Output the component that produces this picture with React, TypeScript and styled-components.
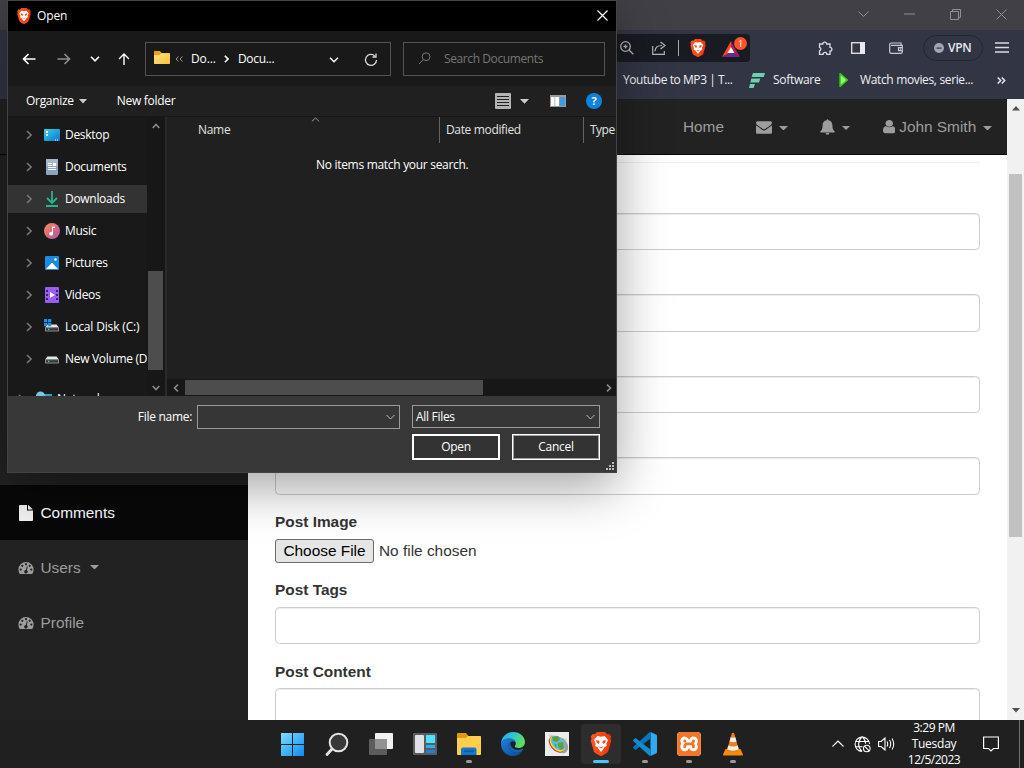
import React from 'react';
import styled, { createGlobalStyle } from 'styled-components';
import { SiXampp } from 'react-icons/si';

const GlobalStyle = createGlobalStyle`
  * { box-sizing: border-box; }
  html, body { margin: 0; padding: 0; }
  body { width: 1024px; height: 768px; overflow: hidden; background: #202020; }
  svg { display: block; flex: none; }
`;

const UI_FONT = `"Open Sans", "Noto Sans", sans-serif`;

const Desktop = styled.div`
  position: relative;
  width: 1024px;
  height: 768px;
  display: flex;
  flex-direction: column;
  overflow: hidden;
  font: 12px/16px ${UI_FONT};
`;

const Text = styled.span<{ $ls?: number; $color?: string }>`
  white-space: nowrap;
  letter-spacing: ${(p) => p.$ls ?? -0.3}px;
  color: ${(p) => p.$color ?? 'inherit'};
`;

/* ---------- browser chrome ---------- */

const TitleBar = styled.div`
  height: 30px;
  flex: none;
  background: #404046;
  display: flex;
  justify-content: flex-end;
  align-items: center;
  padding: 0 17px 2px 0;
  gap: 35px;
`;

const Toolbar = styled.div`
  height: 35px;
  flex: none;
  background: #323544;
  display: flex;
  align-items: center;
  padding-right: 15px;
`;

const UrlBar = styled.div`
  width: 742px;
  margin-left: 8px;
  height: 28px;
  background: #191b22;
  border-radius: 4px;
  display: flex;
  align-items: center;
  justify-content: flex-end;
  padding-right: 3px;
`;

const ToolbarActions = styled.div`
  flex: 1;
  display: flex;
  align-items: center;
  justify-content: flex-end;
`;

const Slot = styled.div<{ $ml?: number; $mt?: number }>`
  display: flex;
  margin-left: ${(p) => p.$ml ?? 0}px;
  margin-top: ${(p) => p.$mt ?? 0}px;
`;

const UrlDivider = styled.div`
  width: 1px;
  height: 16px;
  margin: 0 10px 0 12px;
  background: #a3a5ac;
`;

const Rewards = styled.div`
  position: relative;
  margin-left: 15px;
  width: 25px;
  height: 22px;
  display: flex;
  align-items: flex-end;
  padding-bottom: 2px;
`;

const Badge = styled.div`
  position: absolute;
  right: 0;
  top: 0;
  width: 13px;
  height: 13px;
  border-radius: 50%;
  background: #fb542b;
  color: #fff;
  font-size: 9px;
  line-height: 13px;
  text-align: center;
`;

const VpnPill = styled.div`
  width: 60px;
  height: 26px;
  margin: 0 12px 0 20px;
  border: 1px solid #232532;
  border-radius: 13px;
  display: flex;
  align-items: center;
  gap: 4px;
  padding-left: 10px;
  color: #e8e8ee;
  font-weight: 600;
`;

const Bookmarks = styled.div`
  height: 34px;
  flex: none;
  background: #323544;
  display: flex;
  align-items: center;
  padding: 0 18px 4px 623px;
  color: #f0f0f3;
`;

const Bookmark = styled.div<{ $w: number; $gap?: number }>`
  width: ${(p) => p.$w}px;
  display: flex;
  align-items: center;
  gap: ${(p) => p.$gap ?? 0}px;
`;

/* ---------- admin page ---------- */

const Page = styled.div`
  height: 621px;
  flex: none;
  display: flex;
  overflow: hidden;
  font: 15.4px/22px "Liberation Sans", Arial, sans-serif;
`;

const Site = styled.div`
  flex: 1;
  display: flex;
  flex-direction: column;
  background: #222;
`;

const Navbar = styled.nav`
  height: 56px;
  flex: none;
  background: #222;
  border-bottom: 1px solid #080808;
  display: flex;
  justify-content: flex-end;
  color: #9d9d9d;
`;

const NavLink = styled.a`
  display: flex;
  align-items: center;
  padding: 0 16.2px;

  &:last-child { padding-right: 15.5px; }
`;

const Caret = styled.span<{ $ml?: number; $mt?: number }>`
  width: 8.8px;
  border: 4.4px solid transparent;
  border-top-color: currentColor;
  border-bottom: 0;
  margin-left: ${(p) => p.$ml ?? 6.5}px;
  margin-top: ${(p) => p.$mt ?? 2}px;
`;

const SiteBody = styled.div`
  flex: 1;
  min-height: 0;
  display: flex;
`;

const Sidebar = styled.aside`
  width: 248px;
  flex: none;
  padding-top: 330px;
  background: #222;
`;

const SidebarItem = styled.a<{ $active?: boolean }>`
  height: 55px;
  display: flex;
  align-items: center;
  padding-left: 18px;
  gap: 6.5px;
  color: ${(p) => (p.$active ? '#fff' : '#9d9d9d')};
  background: ${(p) => (p.$active ? '#080808' : 'transparent')};
`;

const Content = styled.main`
  flex: 1;
  background: #fff;
  padding: 7px 27px 0 27px;
  overflow: hidden;
  color: #333;
`;

const Rule = styled.hr`
  height: 1px;
  border: 0;
  margin: 0 0 22.6px;
  background: #eee;
`;

const Field = styled.div`
  margin-bottom: 16.5px;
`;

const FieldLabel = styled.label`
  display: block;
  height: 22px;
  margin-bottom: 5.5px;
  font-weight: 700;
`;

const Input = styled.div<{ $h?: number }>`
  height: ${(p) => p.$h ?? 37.4}px;
  border: 1px solid #ccc;
  border-radius: 4.4px;
  box-shadow: inset 0 1px 1px rgba(0, 0, 0, 0.075);
`;

const FileRow = styled.div`
  height: 24px;
  display: flex;
  align-items: center;
  gap: 5px;
`;

const FileButton = styled.button`
  width: 99px;
  height: 24px;
  padding: 0;
  border: 1px solid #6b6b6b;
  border-radius: 3px;
  background: #e6e6e6;
  color: #000;
  font: inherit;
`;

const PageScroll = styled.div`
  width: 17px;
  flex: none;
  background: #f1f1f1;
  display: flex;
  flex-direction: column;
  align-items: center;
  padding: 7px 0;
`;

const PageThumb = styled.div`
  width: 13px;
  height: 363px;
  margin: 63px 0 auto;
  background: #c1c1c1;
`;

/* ---------- file dialog ---------- */

const Dialog = styled.section`
  position: absolute;
  left: 7px;
  top: 0;
  width: 610px;
  height: 472.5px;
  border: 1px solid #434347;
  background: #202020;
  box-shadow: 0 14px 48px rgba(0, 0, 0, 0.36);
  display: flex;
  flex-direction: column;
  color: #fff;
`;

const DialogTitle = styled.header`
  height: 30px;
  flex: none;
  background: #000;
  display: flex;
  align-items: center;
  padding: 0 8px 1px 8px;
  gap: 5px;
`;

const Grow = styled.div`
  flex: 1;
`;

const AddressRow = styled.div`
  height: 55px;
  flex: none;
  background: #191919;
  display: flex;
  align-items: center;
  padding: 0 11px 0 13px;
`;

const NavButtons = styled.div`
  width: 124px;
  display: flex;
  align-items: center;
`;

const AddressBox = styled.div`
  width: 246px;
  height: 34px;
  border: 1px solid #535353;
  display: flex;
  align-items: center;
  padding: 0 12px 0 8px;
`;

const SearchBox = styled.div`
  width: 202px;
  height: 34px;
  margin-left: 12px;
  border: 1px solid #535353;
  display: flex;
  align-items: center;
  padding-left: 14px;
  gap: 13px;
  color: #767676;
`;

const CommandBar = styled.div`
  height: 31px;
  flex: none;
  border-bottom: 1px solid #171717;
  display: flex;
  align-items: center;
  padding: 0 14px 0 18px;
`;

const Browse = styled.div`
  height: 279px;
  flex: none;
  display: flex;
`;

const Tree = styled.div`
  width: 139px;
  flex: none;
  background: #191919;
  padding-top: 4px;
  overflow: hidden;
`;

const TreeRow = styled.div<{ $selected?: boolean; $root?: boolean }>`
  height: 28px;
  margin-bottom: 4px;
  margin-top: ${(p) => (p.$root ? 12 : 0)}px;
  padding-left: ${(p) => (p.$root ? 10 : 18)}px;
  display: flex;
  align-items: center;
  background: ${(p) => (p.$selected ? '#333' : 'transparent')};
`;

const TreeIcon = styled.div`
  width: 16px;
  margin: 0 5px 0 12px;
  display: flex;
  justify-content: center;
`;

const TreeScroll = styled.div`
  width: 18px;
  flex: none;
  background: #171717;
  display: flex;
  flex-direction: column;
  align-items: center;
  padding: 6px 1px 5px 0;
`;

const TreeThumb = styled.div`
  width: 15px;
  height: 99px;
  margin: auto 0 15px 0;
  background: #4d4d4d;
`;

const FilePane = styled.div`
  flex: 1;
  border-left: 2px solid #2a2a2a;
  display: flex;
  flex-direction: column;
  overflow: hidden;
`;

const Columns = styled.div`
  height: 26px;
  display: flex;
  color: #e2e2e2;
`;

const Column = styled.div<{ $w: number; $pl: number }>`
  width: ${(p) => p.$w}px;
  flex: none;
  padding: 5px 0 0 ${(p) => p.$pl}px;
  border-right: 1px solid #636363;
  display: flex;
  align-items: flex-start;
`;

const SortMark = styled.div`
  margin: -5px 0 0 81px;
`;

const EmptyNote = styled.div`
  flex: 1;
  padding-top: 14px;
  padding-left: 149px;
`;

const HScroll = styled.div`
  height: 17px;
  background: #171717;
  display: flex;
  align-items: center;
  padding: 0 4px 0 6px;
`;

const HThumb = styled.div`
  width: 298px;
  height: 15px;
  margin: 0 auto 0 6px;
  background: #4d4d4d;
`;

const Footer = styled.footer`
  flex: 1;
  background: #383838;
  display: grid;
  grid-template-columns: 184px 208px 205px;
  grid-template-rows: 24px 26px;
  row-gap: 5px;
  padding-top: 9px;
  position: relative;
`;

const FileNameLabel = styled.div`
  text-align: right;
  line-height: 24px;
`;

const Combo = styled.div<{ $w: number; $h: number; $ml: number }>`
  width: ${(p) => p.$w}px;
  height: ${(p) => p.$h}px;
  margin-left: ${(p) => p.$ml}px;
  border: 1px solid #9a9a9a;
  background: #363636;
  display: flex;
  align-items: center;
  justify-content: space-between;
  padding: 0 4px 0 3px;
`;

const Buttons = styled.div`
  grid-column: 3;
  margin-left: 12px;
  display: flex;
  gap: 12px;
`;

const DialogButton = styled.button<{ $primary?: boolean }>`
  width: 88px;
  height: 26px;
  flex: none;
  padding: 0;
  border: ${(p) => (p.$primary ? '2px solid #fff' : '1px solid #fff')};
  box-shadow: ${(p) => (p.$primary ? 'none' : 'inset 0 0 0 1px #a0a0a0')};
  background: #333;
  color: #fff;
  font: 12px/16px ${UI_FONT};
`;

const Grip = styled.div`
  position: absolute;
  right: 2px;
  bottom: 2px;
`;

const HelpDot = styled.span`
  width: 16px;
  height: 16px;
  border-radius: 50%;
  background: #0c84dd;
  color: #fff;
  font-weight: 700;
  font-size: 11px;
  line-height: 16px;
  text-align: center;
`;

/* ---------- taskbar ---------- */

const Taskbar = styled.footer`
  height: 48px;
  flex: none;
  background: #202020;
  display: flex;
  align-items: center;
  padding-left: 273px;
  color: #fff;
`;

const Apps = styled.div`
  display: flex;
  gap: 4px;
`;

const AppSlot = styled.div<{ $active?: boolean }>`
  width: 40px;
  height: 40px;
  border-radius: 4px;
  background: ${(p) => (p.$active ? '#2d2d2d' : 'transparent')};
  display: flex;
  flex-direction: column;
  align-items: center;
  padding-top: 8px;
`;

const RunMark = styled.div<{ $active?: boolean }>`
  width: ${(p) => (p.$active ? 16 : 6)}px;
  height: 3px;
  margin-top: 4px;
  border-radius: 2px;
  background: ${(p) => (p.$active ? '#4cc2ff' : '#9a9a9a')};
`;

const Tray = styled.div`
  flex: 1;
  height: 48px;
  display: flex;
  align-items: center;
  justify-content: flex-end;
`;

const Clock = styled.div`
  width: 60px;
  margin: 0 19px 0 9px;
  display: flex;
  flex-direction: column;
  align-items: center;
`;

const ShowDesktop = styled.div`
  width: 5px;
  height: 48px;
  margin-left: 20px;
  border-left: 1px solid #707070;
`;

/* ---------- drawings ---------- */

type StrokeProps = { w: number; h: number; d: string; c?: string; sw?: number };
const Stroke = ({ w, h, d, c = '#fff', sw = 1.2 }: StrokeProps) => (
  <svg width={w} height={h} viewBox={`0 0 ${w} ${h}`} fill="none" stroke={c} strokeWidth={sw}>
    <path d={d} />
  </svg>
);

const Brave = ({ s }: { s: number }) => (
  <svg width={s} height={s} viewBox="0 0 24 24">
    <defs>
      <linearGradient id="braveShield" x1="0" y1="0" x2="1" y2="0">
        <stop offset="0" stopColor="#ff5a1c" />
        <stop offset="1" stopColor="#f5340e" />
      </linearGradient>
    </defs>
    <path d="M8 0h8l2.200 2.300 2-.3 2 2.500-.8 2.200.8 2-2.800 9.800c-.4 1.400-1 2-2 2.700L12.600 24h-1.200l-4.800-2.800c-1-.7-1.600-1.300-2-2.700L1.800 8.700l.8-2-.8-2.200 2-2.500 2 .3z" fill="url(#braveShield)" />
    <path d="M8.300 4l3.700.8 3.700-.8 3.300 4-1.600 3.800.3 2.200-2.600 1.600-.4 1.200L12 20l-2.700-3.200-.4-1.200L6.300 14l.3-2.200L5 8z" fill="#fff" />
    <path d="M7.200 8l3 .8.300 2-1 1.200-1.800-1.600zM16.800 8l-3 .8-.3 2 1 1.200 1.800-1.600zM9.200 14.200l2.800 1 2.800-1-2.800 2.300z" fill="#fb4a1d" />
  </svg>
);

const Envelope = () => (
  <svg width="16" height="16" viewBox="0 0 1792 1792" fill="currentColor">
    <path d="M1792 710v794q0 66-47 113t-113 47h-1472q-66 0-113-47t-47-113v-794q44 49 101 87 362 246 497 345 57 42 92.5 65.5t94.5 48 110 24.5h2q51 0 110-24.5t94.5-48 92.5-65.5q170-123 498-345 57-39 100-87zm0-294q0 79-49 151t-122 123q-376 261-468 325-10 7-42.5 31t-54 38.5-52 32.5-57.5 27-50 9h-2q-23 0-50-9t-57.5-27-52-32.5-54-38.5-42.5-31q-91-64-262-182.5t-205-142.5q-62-42-117-115.5t-55-136.5q0-78 41.5-130t118.5-52h1472q65 0 112.5 47t47.5 113z" />
  </svg>
);

const Bell = () => (
  <svg width="15" height="16" viewBox="0 0 15 16" fill="currentColor">
    <path d="M6.6 1.2a.9.9 0 0 1 1.8 0c2.6.4 4 2.4 4 5 0 3.600.8 5 2.400 6.300 0 .6-.5 1-1.100 1H1.300c-.6 0-1.100-.4-1.100-1C1.800 11.200 2.600 9.800 2.600 6.200c0-2.600 1.400-4.600 4-5zM5.600 14h3.800a1.900 1.700 0 0 1-3.800 0z" />
  </svg>
);

const User = () => (
  <svg width="12.500" height="15.400" viewBox="256 0 1280 1792" fill="currentColor" preserveAspectRatio="none">
    <path d="M1536 1399q0 109-62.5 187t-150.5 78h-854q-88 0-150.5-78t-62.500-187q0-85 8.500-160.500t31.500-152 58.500-131 94-89 134.500-34.500q131 128 313 128t313-128q76 0 134.500 34.500t94 89 58.500 131 31.500 152 8.500 160.500zm-256-887q0 159-112.500 271.500t-271.500 112.500-271.500-112.500-112.500-271.500 112.500-271.500 271.500-112.500 271.500 112.500 112.500 271.500z" />
  </svg>
);

const FileGlyph = () => (
  <svg width="16" height="16" viewBox="0 0 16 16" fill="#f2f2f2">
    <path d="M2 0h7v5.400h6V15a1 1 0 0 1-1 1H2a1 1 0 0 1-1-1V1a1 1 0 0 1 1-1zM10 .1c.4.1.7.3 1 .6l3.200 3c.3.3.5.500.6.700H10z" />
  </svg>
);

const Gauge = () => (
  <svg width="16" height="16" viewBox="0 0 16 16">
    <path d="M.4 9.600a7.600 7.600 0 0 1 15.200 0c0 1.500-.4 2.900-1.200 4.100-.2.200-.4.300-.6.300H2.200c-.2 0-.4-.1-.6-.3C.8 12.500.4 11.100.4 9.600z" fill="#9d9d9d" />
    <g fill="#222">
      <circle cx="2.700" cy="9.600" r="1.100" />
      <circle cx="4.300" cy="5.800" r="1.100" />
      <circle cx="8" cy="4.200" r="1.100" />
      <circle cx="11.700" cy="5.800" r="1.100" />
      <circle cx="13.300" cy="9.600" r="1.100" />
      <path d="M8.800 6.200l.9.200-.9 3.800a1.800 1.800 0 1 1-1-.2z" />
    </g>
  </svg>
);

const Folder = () => (
  <svg width="16" height="13" viewBox="0 0 24 20" preserveAspectRatio="none">
    <defs>
      <linearGradient id="folderFace" x1="0" y1="0" x2="1" y2="1">
        <stop offset="0" stopColor="#ffe38a" />
        <stop offset="1" stopColor="#fdc137" />
      </linearGradient>
    </defs>
    <path d="M1 0h8l2.500 3H23a1 1 0 0 1 1 1v5H0V1a1 1 0 0 1 1-1z" fill="#e8a50c" />
    <path d="M0 6h8.500L11 3.500h12a1 1 0 0 1 1 1V19a1 1 0 0 1-1 1H1a1 1 0 0 1-1-1z" fill="url(#folderFace)" />
  </svg>
);

const DesktopIcon = () => (
  <svg width="16" height="12" viewBox="0 0 16 12">
    <defs>
      <linearGradient id="desk" x1="0" y1="0" x2="1" y2="1">
        <stop offset="0" stopColor="#36d3ee" />
        <stop offset="1" stopColor="#0b73c8" />
      </linearGradient>
    </defs>
    <rect width="16" height="12" rx="1" fill="url(#desk)" />
    <path d="M2 2h2v2H2zM2 5h2v2H2zM11 10.500h1v1h-1zM13 10.500h1v1h-1z" fill="#fff" />
  </svg>
);
const DocumentsIcon = () => (
  <svg width="12" height="16" viewBox="0 0 12 16">
    <rect width="12" height="16" rx="1" fill="#8ba3bf" />
    <rect width="12" height="7" rx="1" fill="#a5b8ce" />
    <path d="M2 4.500h4M2 6.500h4M2 8.500h8M2 10.500h8" stroke="#fff" />
    <path d="M7 4h3v3H7z" fill="#fff" />
  </svg>
);
const DownloadsIcon = () => (
  <svg width="12" height="16" viewBox="0 0 12 16" fill="none" stroke="#23b590" strokeWidth="1.800">
    <path d="M6 0v12M1 7l5 5 5-5M0 15h12" />
  </svg>
);
const MusicIcon = () => (
  <svg width="16" height="16" viewBox="0 0 16 16">
    <defs>
      <linearGradient id="music" x1="0" y1="0" x2="1" y2="1">
        <stop offset="0" stopColor="#f0935a" />
        <stop offset=".5" stopColor="#d9697a" />
        <stop offset="1" stopColor="#a05cb8" />
      </linearGradient>
    </defs>
    <circle cx="8" cy="8" r="8" fill="url(#music)" />
    <path d="M8 3.500h3V5H9v6H8z" fill="#fff" />
    <circle cx="7.200" cy="10.700" r="1.900" fill="#fff" />
  </svg>
);
const PicturesIcon = () => (
  <svg width="14" height="14" viewBox="0 0 14 14">
    <rect width="14" height="14" rx="1" fill="#1b8ae0" />
    <path d="M1 13l5.200-5.500c.5-.6 1.100-.6 1.600 0L13 13z" fill="#fff" />
    <circle cx="10.500" cy="3.500" r="1.200" fill="#fff" />
  </svg>
);
const VideosIcon = () => (
  <svg width="14" height="16" viewBox="0 0 14 16">
    <rect width="14" height="16" rx="1" fill="#9b5cf0" />
    <path d="M1 3h2v2H1zM1 7h2v2H1zM1 11h2v2H1zM11 3h2v2h-2zM11 7h2v2h-2zM11 11h2v2h-2z" fill="#3f1f78" />
    <path d="M5 5l5 3-5 3z" fill="#fff" />
  </svg>
);
const DiskIcon = ({ system }: { system?: boolean }) => (
  <svg width="16" height="16" viewBox="0 0 16 16">
    <path d="M3.500 5.500h9L15 8.500H1z" fill="#e6e6ea" />
    <rect x="1" y="8.500" width="14" height="4" rx=".6" fill="#8b8d90" />
    <rect x="2" y="9.200" width="12" height="2.300" fill="#343638" />
    <rect x="4" y="9.700" width="1.300" height="1.300" fill="#34e34a" />
    {system && <path d="M0 0h3.300v3.300H0zM4 0h3.300v3.300H4zM0 4h3.300v3.300H0zM4 4h3.300v3.300H4z" fill="#1593ea" />}
  </svg>
);
const NetworkIcon = () => (
  <svg width="16" height="16" viewBox="0 0 16 16">
    <rect x="5" y="3" width="11" height="9" fill="#2aa3c9" />
    <circle cx="4.500" cy="5" r="4.500" fill="#7cc4e4" />
  </svg>
);

const Chevron = () => <Stroke w={6} h={10} d="M1 1l4 4-4 4" c="#757575" sw={1.6} />;

const treeItems: { label: string; icon: React.ReactNode; ls?: number; selected?: boolean }[] = [
  { label: 'Desktop', icon: <DesktopIcon /> },
  { label: 'Documents', icon: <DocumentsIcon /> },
  { label: 'Downloads', icon: <DownloadsIcon />, selected: true },
  { label: 'Music', icon: <MusicIcon /> },
  { label: 'Pictures', icon: <PicturesIcon /> },
  { label: 'Videos', icon: <VideosIcon /> },
  { label: 'Local Disk (C:)', icon: <DiskIcon system />, ls: -0.15 },
  { label: 'New Volume (D:)', icon: <DiskIcon /> },
];

const Windows = () => (
  <svg width="24" height="24" viewBox="0 0 24 24">
    <defs>
      <linearGradient id="win" x1="0" y1="0" x2="1" y2="1">
        <stop offset="0" stopColor="#7fdcff" />
        <stop offset="1" stopColor="#0a8cf0" />
      </linearGradient>
    </defs>
    <path d="M0 1h11v11H0zM12 1h11v11H12zM0 13h11v11H0zM12 13h11v11H12z" fill="url(#win)" />
  </svg>
);
const SearchIcon = () => (
  <svg width="24" height="24" viewBox="0 0 24 24" fill="none" stroke="#e2e3e5" strokeLinecap="round">
    <circle cx="13.500" cy="10.500" r="8.800" fill="#383838" strokeWidth="2" />
    <path d="M7 17l-5 5.500" strokeWidth="2.800" />
  </svg>
);
const TaskView = () => (
  <svg width="24" height="24" viewBox="0 0 24 24">
    <rect x="6" y="1" width="18" height="16" rx="1" fill="#f0f0f0" />
    <rect x="0" y="7" width="18" height="16" rx="1" fill="#5c5c5c" />
    <path d="M6 7h12v10H6z" fill="#929292" />
  </svg>
);
const Widgets = () => (
  <svg width="24" height="24" viewBox="0 0 24 24">
    <rect y="1" width="24" height="22" rx="1" fill="#5a5c5f" />
    <rect x="2" y="3" width="9" height="18" rx="1" fill="#dfe1e4" />
    <rect x="13" y="3" width="9" height="8" rx=".6" fill="#4de3ff" />
    <rect x="13" y="13" width="9" height="3" rx=".6" fill="#22b4f2" />
    <rect x="13" y="18" width="9" height="3" rx=".6" fill="#1a85d6" />
  </svg>
);
const AppFolder = () => (
  <svg width="24" height="24" viewBox="0 0 24 24">
    <path d="M1 1h8l2.500 3H23a1 1 0 0 1 1 1v5H0V2a1 1 0 0 1 1-1z" fill="#dd9c0c" />
    <path d="M0 6h8.500L11 4h12a1 1 0 0 1 1 1V22a1 1 0 0 1-1 1H1a1 1 0 0 1-1-1z" fill="#ffcf4b" />
    <path d="M4 23v-5.500a2 2 0 0 1 2-2h11.500a2 2 0 0 1 2 2V23z" fill="#1277cf" />
    <path d="M7 18.500h10V20H7z" fill="#0b5aa5" />
  </svg>
);
const Edge = () => (
  <svg width="24" height="24" viewBox="0 0 24 24">
    <defs>
      <linearGradient id="edgeTop" x1="0" y1="0" x2="1" y2=".4">
        <stop offset="0" stopColor="#2aa6ea" />
        <stop offset=".5" stopColor="#2fc3d5" />
        <stop offset="1" stopColor="#5fdc5c" />
      </linearGradient>
      <linearGradient id="edgeLow" x1="0" y1="0" x2="1" y2="1">
        <stop offset="0" stopColor="#1c7fdc" />
        <stop offset="1" stopColor="#0c4a9a" />
      </linearGradient>
    </defs>
    <path d="M0 12A12 12 0 0 1 12 0c7 0 12 4.800 12 10 0 3.600-2.700 6-6.200 6-2.500 0-4-.8-4-1.700 0-.7 1-1 1-2.700 0-2.200-2-4.200-5-4.200C5 7.400 0 9.500 0 12z" fill="url(#edgeTop)" />
    <path d="M0 12c0-3.300 3.500-5.700 8-5.700 3.800 0 6.500 2 6.800 4.700-.6-1-1.800-1.700-3-1.700-2.500 0-4 2.200-4 4.700 0 4 4 7 8.500 7 2 0 3.700-.5 5-1.300C19.200 22.300 16 24 12 24 5.400 24 0 18.800 0 12z" fill="url(#edgeLow)" />
    <path d="M7.800 14c0-1.800.8-3.500 2.200-4.300-.5.800-.7 1.700-.5 2.800.5 3 3.700 5.300 7.500 5.300 2 0 3.700-.5 4.800-1 .4-.2.700.2.500.5-.9 1.600-2.500 3.700-6 3.700-4.500 0-8.500-3-8.500-7z" fill="#1763b5" />
  </svg>
);
const GlobePaint = () => (
  <svg width="24" height="24" viewBox="0 0 24 24">
    <rect width="24" height="24" fill="#ececec" />
    <path d="M4 2l18 5-3 15-12-5z" fill="#d2d2d2" />
    <ellipse cx="15.500" cy="13" rx="6.500" ry="9" fill="#9aa09a" transform="rotate(-40 15.500 13)" />
    <ellipse cx="11.500" cy="12.500" rx="6" ry="9.500" fill="#d9302c" transform="rotate(-42 11.500 12.500)" />
    <ellipse cx="12.200" cy="11.800" rx="5.800" ry="9.200" fill="#f5dd30" transform="rotate(-42 12.200 11.800)" />
    <ellipse cx="13" cy="11" rx="5.600" ry="8.500" fill="#57bfe2" transform="rotate(-42 13 11)" />
    <path d="M7 5l6-1 2 3-3 3-4-1zM13 11l5-1 1 6-3 2-3-3zM9 11l3 2-1 3z" fill="#5f9f3c" />
  </svg>
);
const VsCode = () => (
  <svg width="24" height="24" viewBox="0 0 24 24">
    <path d="M17.500 0L23 2.500a1.500 1.500 0 0 1 1 1.400v16.200a1.500 1.500 0 0 1-1 1.400L17.500 24z" fill="#2faaf3" />
    <path d="M17.500 0v6.500L3.200 17.600a1 1 0 0 1-1.300 0L.4 16.200a1 1 0 0 1 0-1.500L16.200.4c.4-.3.800-.4 1.300-.4z" fill="#0874bd" />
    <path d="M17.500 24v-6.500L3.200 6.400a1 1 0 0 0-1.300 0L.4 7.800a1 1 0 0 0 0 1.500l15.800 14.300c.4.3.8.4 1.300.4z" fill="#118bd6" />
  </svg>
);
const XamppTile = styled.span`
  width: 24px;
  height: 24px;
  border-radius: 4px;
  overflow: hidden;
  display: flex;
  color: #f2762a;
  background: #fff;
`;
const Vlc = () => (
  <svg width="24" height="24" viewBox="0 0 24 24">
    <path d="M4.500 17h15L22 22.500a.8.8 0 0 1-.8 1H2.800a.8.8 0 0 1-.8-1z" fill="#f58a0b" />
    <path d="M10.800 1.500c.3-1 2.100-1 2.400 0L18 18c-1 2.600-11 2.600-12 0z" fill="#f07f12" />
    <path d="M9.700 5.200c1.400.6 3.200.6 4.600 0l1.200 4.200c-2 1-5 1-7 0zM7.300 13.500c2.700 1.400 6.700 1.400 9.400 0l1.100 3.700c-3 1.900-8.600 1.900-11.600 0z" fill="#efefef" />
  </svg>
);

const apps: { icon: React.ReactNode; run?: boolean; active?: boolean }[] = [
  { icon: <Windows /> },
  { icon: <SearchIcon /> },
  { icon: <TaskView /> },
  { icon: <Widgets /> },
  { icon: <AppFolder />, run: true },
  { icon: <Edge /> },
  { icon: <GlobePaint /> },
  { icon: <Brave s={24} />, run: true, active: true },
  { icon: <VsCode />, run: true },
  { icon: <XamppTile><SiXampp size={24} /></XamppTile>, run: true },
  { icon: <Vlc />, run: true },
];

const FilePicker = () => (
  <Dialog>
    <DialogTitle>
      <Brave s={16} />
      <Text $ls={-0.1}>Open</Text>
      <Grow />
      <Stroke w={11} h={11} d="M.5.5l10 10M10.500.5l-10 10" />
    </DialogTitle>
    <AddressRow>
      <NavButtons>
        <Slot $ml={1}><Stroke w={14} h={12} d="M13.500 6H1.500M6.500 1l-5 5 5 5" sw={1.6} /></Slot>
        <Slot $ml={21}><Stroke w={14} h={12} d="M.5 6h12M7.500 1l5 5-5 5" c="#8f8f8f" sw={1.6} /></Slot>
        <Slot $ml={19}><Stroke w={10} h={6} d="M1 .8l4 4 4-4" sw={1.6} /></Slot>
        <Slot $ml={18}><Stroke w={12} h={12} d="M6 12V1M1 6l5-5 5 5" sw={1.4} /></Slot>
      </NavButtons>
      <AddressBox>
        <Slot $mt={-3}><Folder /></Slot>
        <Slot $ml={5}><Stroke w={8} h={6} d="M3.500.500l-2.500 2.500 2.500 2.500M7.500.500L5 3l2.500 2.500" c="#9a9a9a" sw={1} /></Slot>
        <Slot $ml={8}><Text $ls={-0.1}>Do...</Text></Slot>
        <Slot $ml={8}><Stroke w={5} h={8} d="M.8.800L4 4 .8 7.200" sw={1.6} /></Slot>
        <Slot $ml={9}><Text>Docu...</Text></Slot>
        <Grow />
        <Slot $mt={2}><Stroke w={10} h={6} d="M1 .8l4 4 4-4" sw={1.4} /></Slot>
        <Slot $ml={25} $mt={2}>
          <Stroke w={14} h={14} d="M12.500 7a5.500 5.500 0 1 1-1.800-4.200M12 .5v3.500H8.500" c="#ddd" sw={1.300} />
        </Slot>
      </AddressBox>
      <SearchBox>
        <Stroke w={13} h={13} d="M1 12l4-4M12 4.700a3.900 3.900 0 1 1-7.800 0 3.900 3.900 0 0 1 7.800 0z" c="#767676" sw={1} />
        <Text $ls={-0.4}>Search Documents</Text>
      </SearchBox>
    </AddressRow>
    <CommandBar>
      <Text>Organize</Text>
      <Slot $ml={5}><svg width="8" height="5"><path d="M0 0h8L4 4.500z" fill="#ccc" /></svg></Slot>
      <Slot $ml={30}><Text>New folder</Text></Slot>
      <Grow />
      <svg width="16" height="16" viewBox="0 0 16 16">
        <rect width="16" height="16" rx="1" fill="#b4b4b4" />
        <path d="M2 3.500h12M2 6.500h12M2 9.500h12M2 12.500h12" stroke="#222" />
      </svg>
      <Slot $ml={9}><svg width="9" height="5"><path d="M0 0h9L4.500 4.700z" fill="#ccc" /></svg></Slot>
      <Slot $ml={21}>
        <svg width="16" height="12" viewBox="0 0 16 12">
          <rect width="16" height="12" fill="#9b9b9b" />
          <path d="M1 2h3.500v9H1zM5.200 2h3.800v9H5.200z" fill="#fff" />
          <path d="M9.800 2H15v9H9.800z" fill="#3f9be4" />
        </svg>
      </Slot>
      <Slot $ml={20}><HelpDot>?</HelpDot></Slot>
    </CommandBar>
    <Browse>
      <Tree>
        {treeItems.map((t) => (
          <TreeRow key={t.label} $selected={t.selected}>
            <Chevron />
            <TreeIcon>{t.icon}</TreeIcon>
            <Text $ls={t.ls}>{t.label}</Text>
          </TreeRow>
        ))}
        <TreeRow $root>
          <Chevron />
          <TreeIcon><NetworkIcon /></TreeIcon>
          <Text>Network</Text>
        </TreeRow>
      </Tree>
      <TreeScroll>
        <Stroke w={8} h={6} d="M.700 5L4 1.500 7.300 5" c="#8a8a8a" sw={1.600} />
        <TreeThumb />
        <Stroke w={8} h={6} d="M.700 1L4 4.500 7.300 1" c="#8a8a8a" sw={1.600} />
      </TreeScroll>
      <FilePane>
        <Columns>
          <Column $w={273} $pl={31}>
            <Text>Name</Text>
            <SortMark><Stroke w={9} h={5} d="M.800 4.500L4.500.900l3.700 3.600" c="#999" sw={1} /></SortMark>
          </Column>
          <Column $w={144} $pl={6}><Text $ls={-0.35}>Date modified</Text></Column>
          <Column $w={40} $pl={6}><Text $ls={-0.5}>Type</Text></Column>
        </Columns>
        <EmptyNote><Text>No items match your search.</Text></EmptyNote>
        <HScroll>
          <Stroke w={6} h={8} d="M5 .700L1.500 4 5 7.300" c="#8a8a8a" sw={1.600} />
          <HThumb />
          <Stroke w={6} h={8} d="M1 .700L4.500 4 1 7.300" c="#8a8a8a" sw={1.600} />
        </HScroll>
      </FilePane>
    </Browse>
    <Footer>
      <FileNameLabel><Text>File name:</Text></FileNameLabel>
      <Combo $w={203} $h={24} $ml={5}>
        <span />
        <Stroke w={9} h={6} d="M.500 1l4 4 4-4" c="#bbb" sw={1} />
      </Combo>
      <Combo $w={188} $h={23} $ml={12}>
        <Text>All Files</Text>
        <Stroke w={9} h={6} d="M.500 1l4 4 4-4" c="#bbb" sw={1} />
      </Combo>
      <Buttons>
        <DialogButton $primary><Text>Open</Text></DialogButton>
        <DialogButton><Text>Cancel</Text></DialogButton>
      </Buttons>
      <Grip>
        <svg width="8" height="8" fill="#bdbdbd">
          <path d="M6 0h2v2H6zM3 3h2v2H3zM6 3h2v2H6zM0 6h2v2H0zM3 6h2v2H3zM6 6h2v2H6z" />
        </svg>
      </Grip>
    </Footer>
  </Dialog>
);

export default function App() {
  return (
    <Desktop>
      <GlobalStyle />
      <TitleBar>
        <Stroke w={11} h={7} d="M.500.500l5 5 5-5" c="#8f8f94" sw={1} />
        <Stroke w={11} h={2} d="M0 1h11" c="#8f8f94" sw={1} />
        <Stroke w={11} h={11} d="M.500 2.500h8v8h-8zM2.500 2.500v-2h8v8h-2" c="#8f8f94" sw={1} />
        <Stroke w={11} h={11} d="M.500.500l10 10M10.500.500l-10 10" c="#8f8f94" sw={1} />
      </TitleBar>
      <Toolbar>
        <UrlBar>
          <Stroke w={14} h={14} d="M10.300 5.500a4.800 4.800 0 1 1-9.600 0 4.800 4.800 0 0 1 9.600 0zM9 9l4.300 4.300M5.500 3.500v4M3.500 5.500h4" c="#b5b7bd" sw={1.300} />
          <Slot $ml={18}>
            <Stroke w={14} h={14} d="M.700 5v8.300h11.600V10M3 10.300c.2-4 3-5.800 7-5.800M8.500 1L13 4.500 8.500 8" c="#b5b7bd" sw={1.200} />
          </Slot>
          <UrlDivider />
          <Brave s={18} />
          <Rewards>
            <svg width="18" height="16" viewBox="0 0 18 16">
              <path d="M9 0L0 16l9-5z" fill="#ff4724" />
              <path d="M9 0l9 16-9-5z" fill="#9e1f63" />
              <path d="M0 16h18l-9-5z" fill="#662d91" />
              <path d="M9 6l3.500 6h-7z" fill="#fff" />
            </svg>
            <Badge>1</Badge>
          </Rewards>
        </UrlBar>
        <ToolbarActions>
          <Stroke w={15} h={14} d="M4.800 3a1.900 1.900 0 0 1 3.800 0H12v3.400a1.900 1.900 0 0 1 0 3.800v3.100H8.900a1.900 1.900 0 0 0-3.800 0H1.500V9.800a1.800 1.800 0 0 0 0-3.500V3z" c="#d9dae2" sw={1.300} />
          <Slot $ml={18}>
            <svg width="14" height="12" viewBox="0 0 14 12">
              <rect x=".7" y=".7" width="12.600" height="10.600" fill="none" stroke="#d9dae2" strokeWidth="1.400" />
              <path d="M9 0h5v12H9z" fill="#e9e9ef" />
            </svg>
          </Slot>
          <Slot $ml={24}>
            <Stroke w={14} h={12} d="M12 3V1H2a1.300 1.300 0 0 0-1.300 1.300v7.400c0 1 .6 1.600 1.600 1.600h9.400c.9 0 1.600-.6 1.600-1.600V3.300H2M13.300 5.700H9.500v3h3.800M10.800 7.200h1" c="#c9cad2" sw={1.200} />
          </Slot>
          <VpnPill>
            <svg width="10" height="10"><circle cx="5" cy="5" r="5" fill="#a2a5b8" /><path d="M2.500 4.500h5v1.200h-5z" fill="#323544" /></svg>
            <Text>VPN</Text>
          </VpnPill>
          <Stroke w={14} h={11} d="M0 1h14M0 5.500h14M0 10h14" c="#d9dae2" sw={1.300} />
        </ToolbarActions>
      </Toolbar>
      <Bookmarks>
        <Bookmark $w={126}><Text $ls={-0.43}>Youtube to MP3 | T...</Text></Bookmark>
        <Bookmark $w={90} $gap={8}>
          <svg width="16" height="15" viewBox="0 0 16 15" fill="#6fd0b0">
            <path d="M4 0h12l-1.300 4H2.600zM2.300 5.500h9L10 9.500H1.400zM1 11h5l-1.400 4H0z" />
          </svg>
          <Text>Software</Text>
        </Bookmark>
        <Bookmark $w={158} $gap={12}>
          <svg width="9" height="14" viewBox="0 0 9 14"><path d="M1 .500L8.500 7 1 13.500z" fill="#9cf06a" stroke="#2cc41c" strokeWidth="1.500" strokeLinejoin="round" /></svg>
          <Text $ls={-0.35}>Watch movies, serie...</Text>
        </Bookmark>
        <Stroke w={9} h={7} d="M.700.500l3 3-3 3M4.700.500l3 3-3 3" c="#e6e6ee" sw={1.500} />
      </Bookmarks>
      <Page>
        <Site>
          <Navbar>
            <NavLink>Home</NavLink>
            <NavLink><Envelope /><Caret /></NavLink>
            <NavLink><Bell /><Caret /></NavLink>
            <NavLink><User /><Slot $ml={4}>John Smith</Slot><Caret /></NavLink>
          </Navbar>
          <SiteBody>
            <Sidebar>
              <SidebarItem $active><FileGlyph />Comments</SidebarItem>
              <SidebarItem><Gauge />Users<Caret $ml={3} $mt={-1} /></SidebarItem>
              <SidebarItem><Gauge />Profile</SidebarItem>
            </Sidebar>
            <Content>
              <Rule />
              {[0, 1, 2, 3].map((i) => (
                <Field key={i}><FieldLabel /><Input /></Field>
              ))}
              <Field>
                <FieldLabel>Post Image</FieldLabel>
                <FileRow><FileButton>Choose File</FileButton>No file chosen</FileRow>
              </Field>
              <Field><FieldLabel>Post Tags</FieldLabel><Input /></Field>
              <Field><FieldLabel>Post Content</FieldLabel><Input $h={220} /></Field>
            </Content>
          </SiteBody>
        </Site>
        <PageScroll>
          <svg width="8" height="5"><path d="M0 4.500h8L4 0z" fill="#505050" /></svg>
          <PageThumb />
          <svg width="8" height="5"><path d="M0 0h8L4 4.500z" fill="#505050" /></svg>
        </PageScroll>
      </Page>
      <Taskbar>
        <Apps>
          {apps.map((a, i) => (
            <AppSlot key={i} $active={a.active}>
              {a.icon}
              {a.run && <RunMark $active={a.active} />}
            </AppSlot>
          ))}
        </Apps>
        <Tray>
          <Stroke w={12} h={8} d="M.500 6.500l5.500-5.500 5.500 5.500" sw={1.200} />
          <Slot $ml={10}>
            <svg width="17" height="17" viewBox="0 0 17 17" fill="none" stroke="#fff" strokeWidth="1.100">
              <path d="M15.500 8A7.200 7.200 0 1 0 8 15.500M8 .8C3.500 5 3.500 11 8 15.500M8.500.8c2 2 3 4.500 3.100 7M1.500 5.500h13.500M1.500 10.800h7" />
              <circle cx="12.800" cy="12.500" r="3.300" />
              <path d="M10.500 10.200l4.600 4.600" />
            </svg>
          </Slot>
          <Slot $ml={7}>
            <Stroke w={17} h={14} d="M.600 4.500h2.500L7 1v12L3.100 9.500H.600zM9 4.500q1.500 2.500 0 5M11.500 3q2.500 4 0 8M14 1.500q3.500 5.500 0 11" sw={1.100} />
          </Slot>
          <Clock>
            <Text $ls={-0.45}>3:29 PM</Text>
            <Text $ls={-0.25}>Tuesday</Text>
            <Text $ls={-0.5}>12/5/2023</Text>
          </Clock>
          <Stroke w={16} h={16} d="M.600 1h14.800v11.500h-4.900L8 15l-2.500-2.500H.600z" sw={1.200} />
          <ShowDesktop />
        </Tray>
      </Taskbar>
      <FilePicker />
    </Desktop>
  );
}
